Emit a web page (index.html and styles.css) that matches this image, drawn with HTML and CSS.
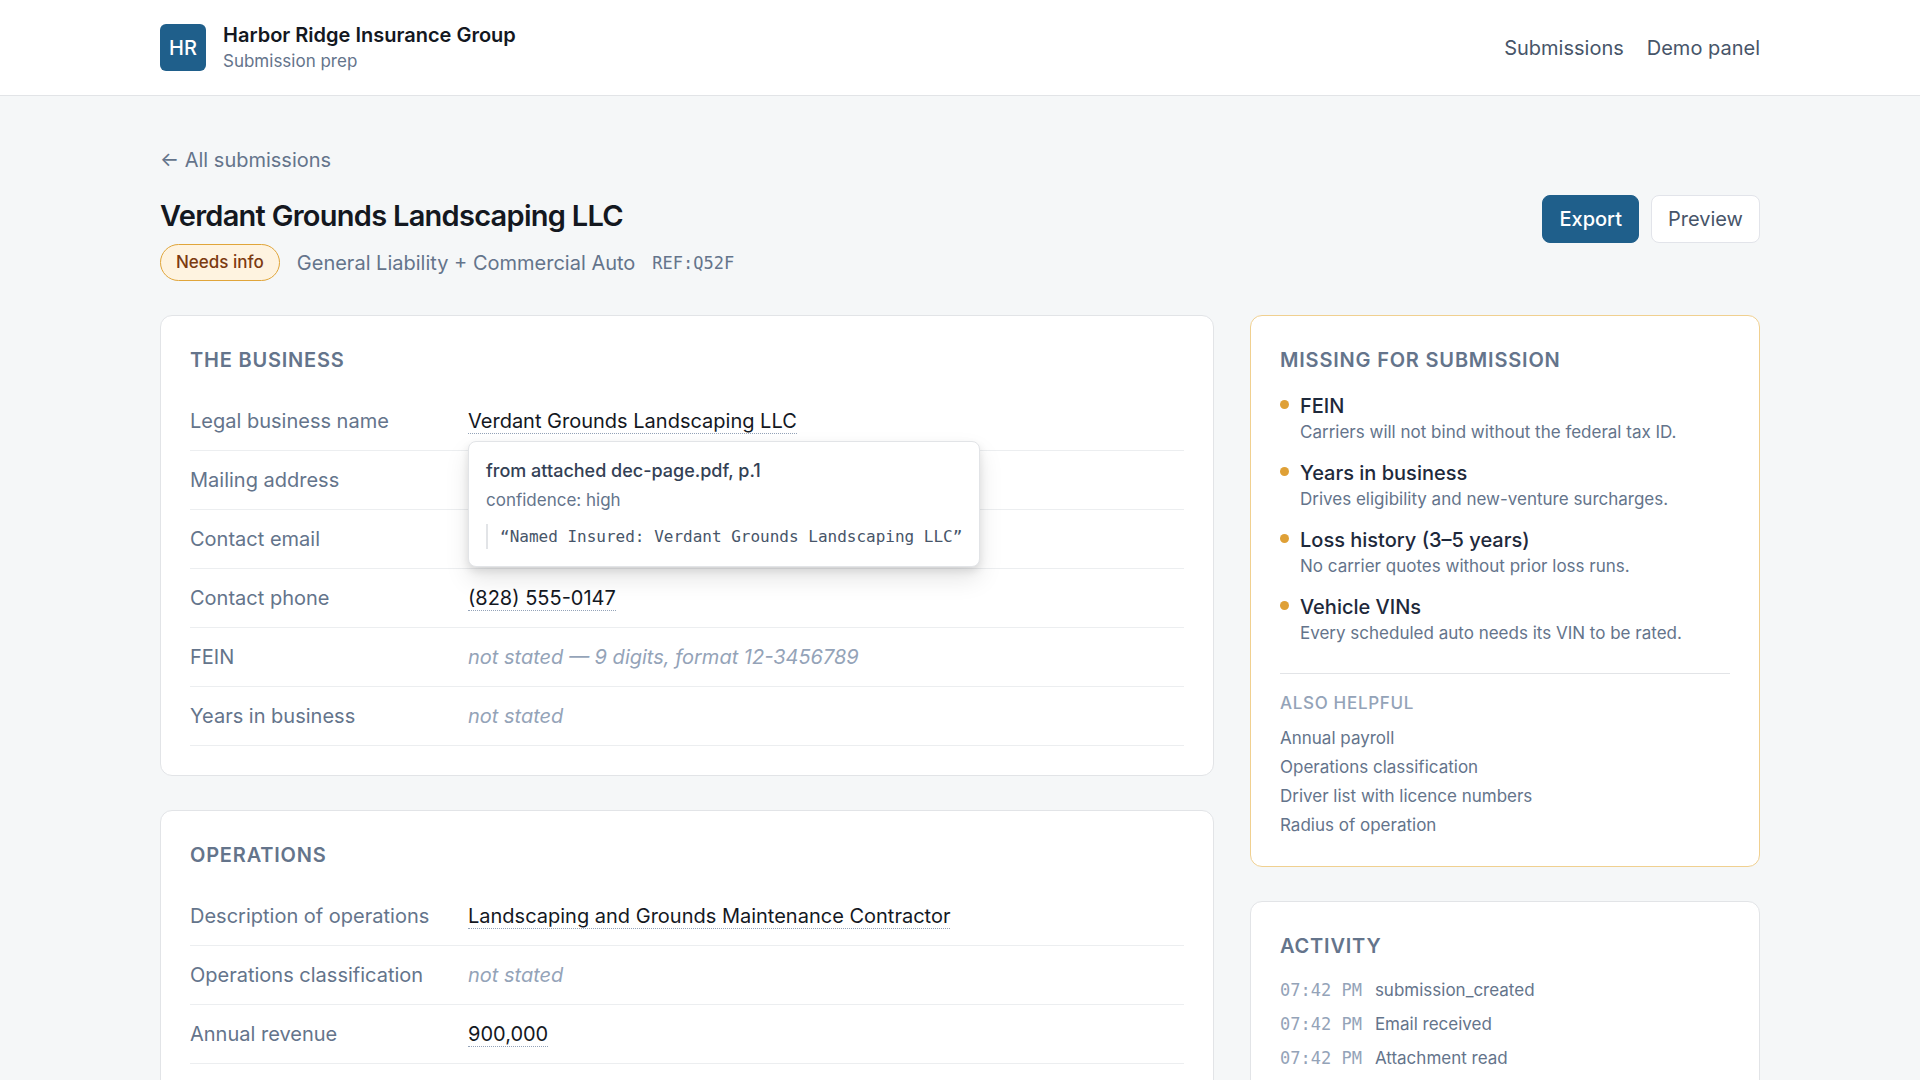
FILE: index.html
```html
<!DOCTYPE html>
<html lang="en">
<head>
    <meta charset="UTF-8">
    <meta name="viewport" content="width=device-width, initial-scale=1.0">
    <title>Verdant Grounds Landscaping LLC - Submission prep</title>
    <link rel="stylesheet" href="styles.css">
</head>
<body>
    <header class="topbar">
        <div class="topbar-inner">
            <div class="brand">
                <div class="brand-logo">HR</div>
                <div class="brand-text">
                    <div class="brand-name">Harbor Ridge Insurance Group</div>
                    <div class="brand-sub">Submission prep</div>
                </div>
            </div>
            <nav class="topnav">
                <a href="#">Submissions</a>
                <a href="#">Demo panel</a>
            </nav>
        </div>
    </header>

    <main class="page">
        <a href="#" class="back-link">← All submissions</a>

        <div class="page-head">
            <div>
                <h1>Verdant Grounds Landscaping LLC</h1>
                <div class="meta">
                    <span class="badge">Needs info</span>
                    <span class="lines">General Liability + Commercial Auto</span>
                    <span class="ref">REF:Q52F</span>
                </div>
            </div>
            <div class="actions">
                <button type="button" class="btn btn-primary">Export</button>
                <button type="button" class="btn">Preview</button>
            </div>
        </div>

        <div class="columns">
            <div class="column">
                <section class="card">
                    <h2>The business</h2>
                    <dl class="fields">
                        <div class="field">
                            <dt>Legal business name</dt>
                            <dd>
                                <span class="value">Verdant Grounds Landscaping LLC</span>
                                <!-- Source popover -->
                                <div class="popover" role="tooltip">
                                    <div class="popover-source">from attached dec-page.pdf, p.1</div>
                                    <div class="popover-confidence">confidence: high</div>
                                    <blockquote>“Named Insured: Verdant Grounds Landscaping LLC”</blockquote>
                                </div>
                            </dd>
                        </div>
                        <div class="field">
                            <dt>Mailing address</dt>
                            <dd></dd>
                        </div>
                        <div class="field">
                            <dt>Contact email</dt>
                            <dd></dd>
                        </div>
                        <div class="field">
                            <dt>Contact phone</dt>
                            <dd><span class="value">(828) 555-0147</span></dd>
                        </div>
                        <div class="field">
                            <dt>FEIN</dt>
                            <dd class="empty">not stated — 9 digits, format 12-3456789</dd>
                        </div>
                        <div class="field">
                            <dt>Years in business</dt>
                            <dd class="empty">not stated</dd>
                        </div>
                    </dl>
                </section>

                <section class="card">
                    <h2>Operations</h2>
                    <dl class="fields">
                        <div class="field">
                            <dt>Description of operations</dt>
                            <dd><span class="value">Landscaping and Grounds Maintenance Contractor</span></dd>
                        </div>
                        <div class="field">
                            <dt>Operations classification</dt>
                            <dd class="empty">not stated</dd>
                        </div>
                        <div class="field">
                            <dt>Annual revenue</dt>
                            <dd><span class="value">900,000</span></dd>
                        </div>
                    </dl>
                </section>
            </div>

            <aside class="column">
                <section class="card card-missing">
                    <h2>Missing for submission</h2>
                    <ul class="missing">
                        <li>
                            <strong>FEIN</strong>
                            <p>Carriers will not bind without the federal tax ID.</p>
                        </li>
                        <li>
                            <strong>Years in business</strong>
                            <p>Drives eligibility and new-venture surcharges.</p>
                        </li>
                        <li>
                            <strong>Loss history (3–5 years)</strong>
                            <p>No carrier quotes without prior loss runs.</p>
                        </li>
                        <li>
                            <strong>Vehicle VINs</strong>
                            <p>Every scheduled auto needs its VIN to be rated.</p>
                        </li>
                    </ul>
                    <div class="helpful">
                        <h3>Also helpful</h3>
                        <ul>
                            <li>Annual payroll</li>
                            <li>Operations classification</li>
                            <li>Driver list with licence numbers</li>
                            <li>Radius of operation</li>
                        </ul>
                    </div>
                </section>

                <section class="card">
                    <h2>Activity</h2>
                    <ul class="activity">
                        <li><time>07:42 PM</time><span>submission_created</span></li>
                        <li><time>07:42 PM</time><span>Email received</span></li>
                        <li><time>07:42 PM</time><span>Attachment read</span></li>
                    </ul>
                </section>
            </aside>
        </div>
    </main>
</body>
</html>
```
FILE: styles.css
```css
* {
    box-sizing: border-box;
}

body {
    margin: 0;
    font-family: Inter, "Liberation Sans", sans-serif;
    font-size: 20px;
    line-height: 30px;
    color: #14181f;
    background-color: #f5f7f8;
}

h1, h2, h3, p, ul, dl, dd, blockquote {
    margin: 0;
    padding: 0;
}

ul {
    list-style: none;
}

a {
    text-decoration: none;
}

/* Top bar */
.topbar {
    background-color: #fff;
    border-bottom: 1px solid #e2e4e7;
}

.topbar-inner {
    max-width: 1648px;
    margin: 0 auto;
    padding: 22px 24px;
    display: flex;
    justify-content: space-between;
    align-items: center;
}

.brand {
    display: flex;
    align-items: center;
    gap: 17px;
}

.brand-logo {
    width: 46px;
    height: 47px;
    border-radius: 6px;
    background-color: #1f5f8b;
    color: #fff;
    font-weight: 500;
    display: flex;
    align-items: center;
    justify-content: center;
}

.brand-name {
    font-weight: 600;
    line-height: 27px;
}

.brand-sub {
    font-size: 17px;
    line-height: 24px;
    color: #64748b;
}

.topnav {
    display: flex;
    gap: 23px;
}

.topnav a {
    color: #475569;
}

/* Page */
.page {
    max-width: 1648px;
    margin: 0 auto;
    padding: 49px 24px;
}

.back-link {
    display: inline-block;
    color: #64748b;
}

.page-head {
    display: flex;
    justify-content: space-between;
    align-items: flex-start;
    margin: 20px 0 34px;
}

h1 {
    font-size: 29px;
    line-height: 42px;
    font-weight: 600;
    letter-spacing: -0.025em;
}

.meta {
    display: flex;
    align-items: center;
    gap: 17px;
    margin-top: 7px;
    color: #64748b;
}

.badge {
    padding: 5px 15px;
    border: 1px solid #e0a53a;
    border-radius: 20px;
    background-color: #fef3e0;
    color: #7c3a10;
    font-size: 17px;
    line-height: 25px;
    font-weight: 500;
}

.ref {
    font-family: "DejaVu Sans Mono", monospace;
    font-size: 17px;
}

.actions {
    display: flex;
    gap: 12px;
}

.btn {
    padding: 8px 16px;
    border: 1px solid #e2e4ea;
    border-radius: 8px;
    background-color: #fff;
    color: #475569;
    font: inherit;
    cursor: pointer;
}

.btn-primary {
    border-color: #1f5f8b;
    background-color: #1f5f8b;
    color: #fff;
    font-weight: 500;
}

.columns {
    display: grid;
    grid-template-columns: minmax(0, 1fr) 510px;
    gap: 36px;
    align-items: start;
}

.column {
    display: flex;
    flex-direction: column;
    gap: 34px;
}

/* Cards */
.card {
    padding: 29px;
    border: 1px solid #e2e4e7;
    border-radius: 12px;
    background-color: #fff;
}

.card-missing {
    border-color: #f0d090;
}

h2 {
    font-size: 20px;
    line-height: 30px;
    font-weight: 600;
    letter-spacing: 0.04em;
    text-transform: uppercase;
    color: #64748b;
}

/* Field rows */
.fields {
    margin-top: 17px;
}

.field {
    display: grid;
    grid-template-columns: 260px minmax(0, 1fr);
    gap: 18px;
    padding: 14px 0;
    border-bottom: 1px solid #eceef0;
}

.field dt {
    color: #64748b;
}

.field dd {
    position: relative;
}

.value {
    border-bottom: 1px dotted #94a3b8;
}

.field .empty {
    color: #94a3b8;
    font-style: italic;
}

.popover {
    position: absolute;
    top: 35px;
    left: 0;
    z-index: 10;
    padding: 17px;
    border: 1px solid #e2e4e7;
    border-radius: 8px;
    background-color: #fff;
    box-shadow: 0 12px 24px rgba(0, 0, 0, 0.1), 0 4px 8px rgba(0, 0, 0, 0.1);
    font-size: 17px;
    line-height: 24px;
    white-space: nowrap;
}

.popover-source {
    font-size: 18px;
    font-weight: 500;
    color: #334155;
}

.popover-confidence {
    margin-top: 5px;
    color: #64748b;
}

.popover blockquote {
    margin-top: 12px;
    padding-left: 12px;
    border-left: 2px solid #e2e4e7;
    font-family: "DejaVu Sans Mono", monospace;
    font-size: 16px;
    line-height: 25px;
    color: #475569;
}

/* Missing items */
.missing {
    display: flex;
    flex-direction: column;
    gap: 15px;
    margin-top: 17px;
}

.missing li {
    position: relative;
    padding-left: 20px;
}

.missing li::before {
    content: "";
    position: absolute;
    top: 8px;
    left: 0;
    width: 9px;
    height: 9px;
    border-radius: 50%;
    background-color: #dfa036;
}

.missing strong {
    display: block;
    line-height: 28px;
    font-weight: 500;
    color: #1e293b;
}

.missing p {
    font-size: 17px;
    line-height: 24px;
    color: #64748b;
}

.helpful {
    margin-top: 28px;
    padding-top: 17px;
    border-top: 1px solid #e2e4e7;
    font-size: 17px;
    line-height: 24px;
    color: #64748b;
}

.helpful h3 {
    margin-bottom: 11px;
    font-size: 17px;
    font-weight: 500;
    letter-spacing: 0.04em;
    text-transform: uppercase;
    color: #94a3b8;
}

.helpful li + li {
    margin-top: 5px;
}

/* Activity */
.activity {
    display: flex;
    flex-direction: column;
    gap: 10px;
    margin-top: 17px;
    font-size: 17px;
    line-height: 24px;
    color: #64748b;
}

.activity li {
    display: flex;
    align-items: baseline;
    gap: 13px;
}

.activity time {
    font-family: "DejaVu Sans Mono", monospace;
    color: #94a3b8;
}
```
